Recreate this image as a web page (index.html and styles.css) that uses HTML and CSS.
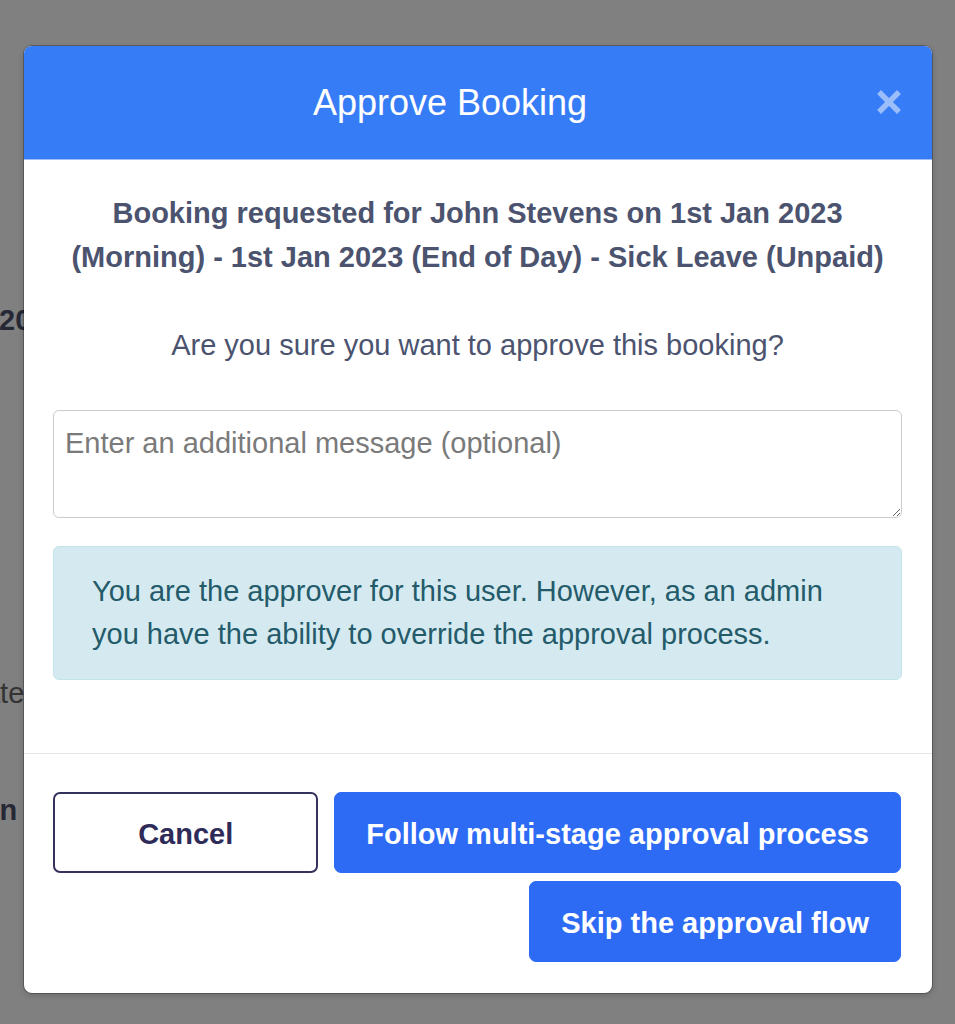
FILE: index.html
```html
<!DOCTYPE html>
<html>
<head>
<meta charset="utf-8">
<link rel="stylesheet" href="styles.css">
</head>
<body>
<div class="page">
  <p class="bg-line bg-bold bg-first">2023</p>
  <p class="bg-line bg-reg bg-second">Date</p>
  <p class="bg-line bg-bold bg-third">Admin</p>
</div>
<div class="modal">
  <div class="modal-header">
    <h4 class="modal-title">Approve Booking</h4>
    <button class="close" aria-label="Close">
      <svg width="24" height="24" viewBox="0 0 24 24"><path d="M4 4 L20 20 M20 4 L4 20" stroke="currentColor" stroke-width="5.5" stroke-linecap="square" fill="none"/></svg>
    </button>
  </div>
  <div class="modal-body">
    <p class="summary">Booking requested for John Stevens on 1st Jan 2023 (Morning) - 1st Jan 2023 (End of Day) - Sick Leave (Unpaid)</p>
    <p class="question">Are you sure you want to approve this booking?</p>
    <textarea class="message" placeholder="Enter an additional message (optional)"></textarea>
    <div class="alert">You are the approver for this user. However, as an admin you have the ability to override the approval process.</div>
  </div>
  <div class="modal-footer">
    <button class="btn btn-cancel">Cancel</button>
    <button class="btn btn-primary">Follow multi-stage approval process</button>
    <button class="btn btn-primary">Skip the approval flow</button>
  </div>
</div>
</body>
</html>
```
FILE: styles.css
```css
html, body {
  margin: 0;
  padding: 0;
}
body {
  background: #808080;
  font-family: "Liberation Sans", Arial, Helvetica, sans-serif;
  width: 955px;
  height: 1024px;
  overflow: hidden;
  position: relative;
}
.page {
  padding-top: 298px;
}
.bg-line {
  margin: 0;
  font-size: 29px;
  line-height: 44px;
  white-space: nowrap;
}
.bg-bold {
  font-weight: bold;
  color: #262836;
}
.bg-reg {
  color: #333333;
}
.bg-first {
  margin-left: -1px;
}
.bg-second {
  margin-top: 329px;
  margin-left: -37px;
}
.bg-third {
  margin-top: 73px;
  margin-left: -73px;
}
.modal {
  position: absolute;
  left: 24px;
  top: 46px;
  width: 908px;
  background: #ffffff;
  border-radius: 8px;
  box-shadow: 0 0 0 1px rgba(0, 0, 0, 0.25), 0 2px 6px rgba(0, 0, 0, 0.2);
  overflow: hidden;
}
.modal-header {
  background: #377cf7;
  height: 113px;
  border-bottom: 1px solid #9fbdf7;
  display: flex;
  align-items: center;
  justify-content: center;
  position: relative;
}
.modal-title {
  margin: 0;
  color: #ffffff;
  font-weight: normal;
  font-size: 36px;
  line-height: 44px;
  margin-left: -56px;
}
.close {
  position: absolute;
  right: 31px;
  top: 44px;
  background: none;
  border: none;
  padding: 0;
  width: 24px;
  height: 24px;
  color: rgba(255, 255, 255, 0.5);
  cursor: pointer;
}
.close svg {
  display: block;
}
.modal-body {
  padding: 31px 30px 73px 29px;
  display: flex;
  flex-direction: column;
}
.summary {
  margin: 0;
  text-align: center;
  font-weight: bold;
  font-size: 29px;
  line-height: 44px;
  color: #4b536f;
}
.question {
  margin: 44px 0 0 0;
  text-align: center;
  font-size: 29px;
  line-height: 44px;
  color: #4b536f;
}
.message {
  margin-top: 43px;
  box-sizing: border-box;
  width: 100%;
  height: 108px;
  border: 1px solid #cccccc;
  border-radius: 6px;
  padding: 10px 11px;
  font-family: "Liberation Sans", Arial, Helvetica, sans-serif;
  font-size: 29px;
  line-height: 44px;
  color: #555555;
}
.message::placeholder {
  color: #7a7a7a;
}
.alert {
  margin-top: 28px;
  box-sizing: border-box;
  background: #d5eaf0;
  border: 1px solid #c4e4eb;
  border-radius: 6px;
  padding: 23px 30px 23px 38px;
  font-size: 29px;
  line-height: 43px;
  color: #245b6a;
}
.modal-footer {
  border-top: 1px solid #e5e5e5;
  padding: 38px 31px 31px 29px;
  display: flex;
  flex-wrap: wrap;
  justify-content: flex-end;
  gap: 8px 16px;
}
.btn {
  box-sizing: border-box;
  height: 81px;
  border-radius: 7px;
  font-family: "Liberation Sans", Arial, Helvetica, sans-serif;
  font-weight: bold;
  font-size: 29px;
  padding: 4px 31px 0 31px;
  cursor: pointer;
}
.btn-cancel {
  width: 265px;
  background: #ffffff;
  color: #2e2b59;
  border: 2px solid #34325c;
}
.btn-primary {
  background: #2e6bf5;
  color: #ffffff;
  border: 1px solid #2e6bf5;
}
```
